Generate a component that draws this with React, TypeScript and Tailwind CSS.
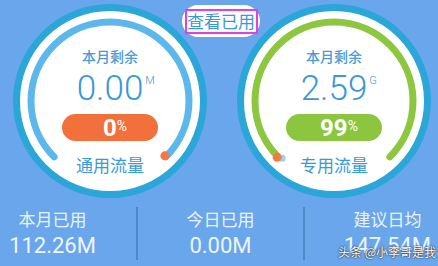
const CJK = "font-['Noto_Sans_CJK_SC','Noto_Sans',sans-serif]"
const NUM = "font-['Roboto','Noto_Sans',sans-serif]"

type GaugeProps = {
  value: string
  unit: string
  percent: string
  name: string
  arc: string
  pill: string
  dotAtStart?: boolean
}

function Gauge({ value, unit, percent, name, arc, pill, dotAtStart }: GaugeProps) {
  // arc from bottom-left (225deg) clockwise over the top to bottom-right (315deg)
  const sx = 34.14
  const ex = 145.86
  const y = 145.86
  return (
    <div className="relative flex h-[194px] w-[194px] shrink-0 flex-col items-center rounded-full border-[7px] border-[#2aa6d9] bg-white">
      <svg className="absolute inset-0" width="180" height="180" viewBox="0 0 180 180">
        <path
          d={`M ${sx} ${y} A 79 79 0 1 1 ${ex} ${y}`}
          fill="none"
          stroke={arc}
          strokeWidth="7"
          strokeLinecap="round"
        />
        {dotAtStart ? (
          <>
            <circle cx={sx + 4} cy={y + 1.5} r="3.5" fill="#9fd0f0" />
            <circle cx={sx - 1} cy={y + 0.5} r="4.5" fill="#f37a45" />
          </>
        ) : (
          <circle cx={ex - 1} cy={y - 1} r="4.5" fill="#f37a45" />
        )}
      </svg>
      <div className={`relative pt-[37px] text-[14px] font-medium leading-[16px] text-[#4a9bd3] ${CJK}`}>本月剩余</div>
      <div className={`relative mt-[8px] text-[35px] font-light leading-[34px] text-[#3b97d9] ${NUM}`}>
        {value}
        <span className="absolute left-full top-[3px] ml-[2px] text-[11px] leading-[11px]">{unit}</span>
      </div>
      <div
        className={`relative mt-[8px] flex h-[27px] w-[96px] items-center justify-center rounded-full pl-[10px] text-white ${NUM}`}
        style={{ backgroundColor: pill }}
      >
        <span className="text-[24px] font-bold leading-[24px]">{percent}</span>
        <span className="mb-[3px] text-[14px] leading-[14px]">%</span>
      </div>
      <div className={`relative mt-[14px] text-[17px] leading-[20px] text-[#3b98d6] ${CJK}`}>{name}</div>
    </div>
  )
}

function Stat({ label, value, divider }: { label: string; value: string; divider?: boolean }) {
  return (
    <div className={`flex h-[53px] flex-col items-center pt-[1px] ${divider ? 'border-l-2 border-[#4f88c9]' : ''}`}>
      <div className={`text-[17px] leading-[22px] text-[#eaf3fd] ${CJK}`}>{label}</div>
      <div className={`mt-[3px] text-[22px] leading-[26px] text-[#eef5fd] ${NUM}`}>{value}</div>
    </div>
  )
}

export default function App() {
  return (
    <div className="relative h-[266px] w-[438px] overflow-hidden bg-[#6aa6ec]">
      <div className="flex gap-[30px] pl-[13px] pt-[4px]">
        <Gauge value="0.00" unit="M" percent="0" name="通用流量" arc="#5cb8ec" pill="#f2703b" />
        <Gauge value="2.59" unit="G" percent="99" name="专用流量" arc="#8cc73f" pill="#8cc63f" dotAtStart />
      </div>

      <div className="-ml-[31px] mt-[9px] grid w-[501px] grid-cols-3">
        <Stat label="本月已用" value="112.26M" />
        <Stat label="今日已用" value="0.00M" divider />
        <Stat label="建议日均" value="147.54M" divider />
      </div>

      {/* view-used button, highlighted */}
      <div className="absolute left-[182px] top-[5px] flex h-[32px] w-[78px] items-center justify-center rounded-full bg-white">
        <div className={`flex h-[25px] w-[73px] items-center justify-center border-2 border-[#e83ee0] text-[17px] leading-[20px] text-[#3b98d6] ${CJK}`}>
          查看已用
        </div>
      </div>

      <div
        className={`absolute left-[338px] top-[244px] text-[12px] leading-[16px] text-white ${CJK}`}
        style={{ textShadow: '0 0 2px #333, 0 0 1px #000' }}
      >
        头条 @小李哥是我
      </div>
    </div>
  )
}
